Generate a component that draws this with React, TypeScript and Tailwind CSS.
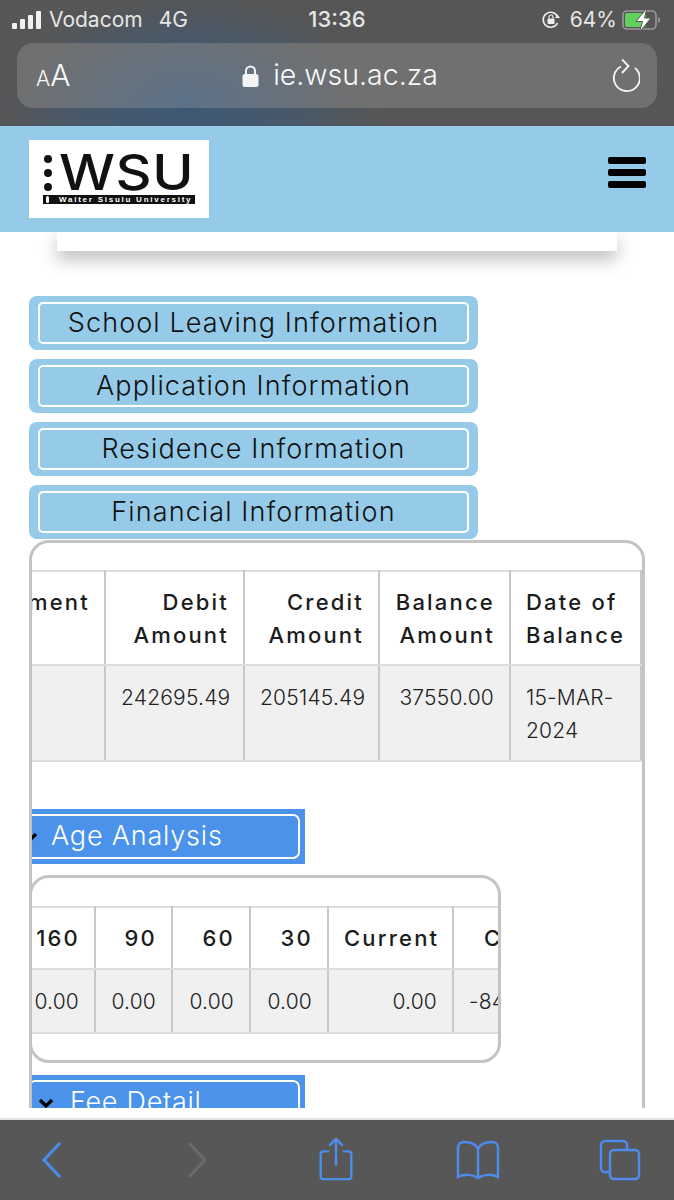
import React from "react";

const ff = "font-['Inter','Liberation_Sans',sans-serif]";

function InfoButton({ label }: { label: string }) {
  return (
    <div className="rounded-lg bg-[#95cbe8] px-[9px] py-[6px]">
      <div className="flex h-[42px] items-center justify-center rounded-[5px] border-2 border-white text-[27px] font-light tracking-[1.1px] text-[#111]">
        {label}
      </div>
    </div>
  );
}

function Th({ children, left, single }: { children: React.ReactNode; left?: boolean; single?: boolean }) {
  return (
    <th className={`border-x-2 border-b-2 border-t-2 border-x-[#c8c8c8] border-y-[#dcdcdc] pl-[15px] pr-[14px] pt-[14px] align-top text-[22px] font-medium leading-[33px] tracking-[2.2px] text-[#1c1c1c] ${single ? "pb-[13px]" : "pb-[12px]"} ${left ? "text-left" : "text-right"}`}>
      {children}
    </th>
  );
}

function Td({ children, left, single }: { children: React.ReactNode; left?: boolean; single?: boolean }) {
  return (
    <td className={`border-x-2 border-b-2 border-x-[#c8c8c8] border-b-[#dcdcdc] bg-[#f0f0f0] px-[15px] pt-[15px] align-top text-[21px] font-light leading-[33px] tracking-[0.2px] text-[#222] ${single ? "pb-[14px]" : "pb-[13px]"} ${left ? "text-left" : "text-right"}`}>
      {children}
    </td>
  );
}

function Chevron() {
  return (
    <svg width="16" height="10" viewBox="0 0 16 10" className="shrink-0">
      <path d="M2 2l6 6 6-6" fill="none" stroke="#000" strokeWidth="3.2" />
    </svg>
  );
}

export default function App() {
  return (
    <div className={`flex h-[1200px] w-[674px] flex-col overflow-hidden bg-white ${ff}`}>
      {/* Browser top */}
      <div className="h-[126px] shrink-0 bg-[#565656] bg-[radial-gradient(ellipse_190px_110px_at_190px_105px,#3d5875_0%,#47586a_55%,#565656_100%)] px-[12px] text-[#e6e6e6]">
        <div className="mb-[4px] grid h-[39px] grid-cols-3 items-center text-[21px]">
          <div className="flex items-center">
            <svg width="30" height="20" viewBox="0 0 30 20" className="mr-[7px]">
              <rect x="0" y="13" width="5" height="6" rx="1" fill="#f0f0f0" />
              <rect x="8" y="9" width="5" height="10" rx="1" fill="#f0f0f0" />
              <rect x="16" y="5" width="5" height="14" rx="1" fill="#f0f0f0" />
              <rect x="24" y="1" width="5" height="18" rx="1" fill="#f0f0f0" />
            </svg>
            <span>Vodacom</span>
            <span className="ml-[16px]">4G</span>
          </div>
          <div className="text-center text-[22px] font-medium">13:36</div>
          <div className="flex items-center justify-end">
            <svg width="20" height="20" viewBox="0 0 20 20" className="mr-[9px]">
              <path d="M16.5 13A7.5 7.5 0 1 1 16.5 6.5" fill="none" stroke="#eee" strokeWidth="1.6" />
              <path d="M14 8h5l-2.5-3.5z" fill="#eee" />
              <rect x="6.5" y="8.5" width="7" height="5.5" rx="1" fill="#eee" />
              <path d="M8 8.5V7a2 2 0 0 1 4 0v1.5" fill="none" stroke="#eee" strokeWidth="1.2" />
            </svg>
            <span>64%</span>
            <svg width="40" height="24" viewBox="0 0 40 24" className="ml-[5px]">
              <rect x="1" y="3" width="33" height="18" rx="4" fill="none" stroke="#9b9b9b" strokeWidth="1.6" />
              <rect x="3" y="5" width="21" height="14" rx="2" fill="#62d05c" />
              <path d="M36 9v6c1.500-.5 2-1.500 2-3s-.5-2.500-2-3z" fill="#9b9b9b" />
              <path d="M25 0L14 13.500h6.500L17.500 24 29 10h-6.500z" fill="#fff" stroke="#565656" strokeWidth="1" />
            </svg>
          </div>
        </div>
        <div className="mx-[5px] flex h-[65px] items-center justify-between rounded-[16px] bg-[#707070] bg-[radial-gradient(ellipse_170px_90px_at_170px_60px,#5d7289_0%,#68717a_60%,#707070_100%)] pl-[19px] pr-[17px] text-[#f8f8f8]">
          <div className="flex w-[34px] items-baseline">
            <span className="text-[21px] font-light">A</span>
            <span className="text-[30px] font-light">A</span>
          </div>
          <div className="flex items-center">
            <svg width="17" height="24" viewBox="0 0 17 24" className="mr-[14px]">
              <path d="M4 11V7a4.500 4.500 0 0 1 9 0v4" fill="none" stroke="#f4f4f4" strokeWidth="2" />
              <rect x="0.500" y="10" width="16" height="13" rx="2.500" fill="#f4f4f4" />
            </svg>
            <span className="text-[28.5px] font-light leading-none">ie.wsu.ac.za</span>
          </div>
          <svg width="30" height="36" viewBox="0 0 30 36" fill="none" stroke="#f4f4f4" strokeWidth="1.900">
            <path d="M11 8.500A13 13 0 1 0 25 10" />
            <path d="M12 1.500l6.500 6.500-6.500 7" />
          </svg>
        </div>
      </div>

      {/* Site header */}
      <div className="flex h-[106px] shrink-0 items-center justify-between bg-[#95cbe8] pl-[29px] pr-[29px]">
        <div className="mb-[1px] flex h-[78px] w-[180px] flex-col justify-center bg-white pl-[14px]">
          <div className="flex h-[38px] items-center">
            <div className="flex w-[16px] flex-col gap-[6px] pl-[1px]">
              <div className="h-[8px] w-[8px] rounded-full bg-[#111]" />
              <div className="h-[8px] w-[8px] rounded-full bg-[#111]" />
              <div className="h-[8px] w-[8px] rounded-full bg-[#111]" />
            </div>
            <span className="block origin-left scale-x-[1.14] text-[49px] font-medium leading-[38px] tracking-[0.5px] text-[#111]">WSU</span>
          </div>
          <div className="mt-[3px] flex h-[9px] w-[152px] items-center overflow-hidden bg-[#111] pl-[3px] font-['Liberation_Sans',sans-serif] text-[8px] font-bold leading-[9px] tracking-[1.75px] text-white">
            <div className="mr-[10px] h-[7px] w-[3px] shrink-0 rounded-full bg-white" />
            <span>Walter Sisulu University</span>
          </div>
        </div>
        <div className="mb-[14px] mr-[-1px] flex w-[38px] flex-col gap-[5px]">
          <div className="h-[7px] rounded-[2px] bg-black" />
          <div className="h-[7px] rounded-[2px] bg-black" />
          <div className="h-[7px] rounded-[2px] bg-black" />
        </div>
      </div>

      {/* Scrollable content */}
      <div className="h-[876px] shrink-0 overflow-hidden">
        <div className="mx-[57px] h-[19px] bg-white shadow-[0_8px_18px_rgba(0,0,0,0.28)]" />
        <div className="ml-[29px] mt-[45px] flex w-[449px] flex-col gap-[9px]">
          <InfoButton label="School Leaving Information" />
          <InfoButton label="Application Information" />
          <InfoButton label="Residence Information" />
          <InfoButton label="Financial Information" />
        </div>

        <div className="ml-[29px] mt-[1px] h-[640px] w-[616px] overflow-hidden rounded-[20px] border-[3px] border-[#c4c4c4] pt-[27px]">
          <table className="ml-[-128px] w-[736px] table-fixed border-collapse">
            <colgroup>
              <col className="w-[200px]" />
              <col className="w-[139px]" />
              <col className="w-[135px]" />
              <col className="w-[131px]" />
              <col className="w-[131px]" />
            </colgroup>
            <thead>
              <tr>
                <Th>Payment</Th>
                <Th>Debit Amount</Th>
                <Th>Credit Amount</Th>
                <Th>Balance Amount</Th>
                <Th left>Date of Balance</Th>
              </tr>
            </thead>
            <tbody>
              <tr>
                <Td> </Td>
                <Td>242695.49</Td>
                <Td>205145.49</Td>
                <Td>37550.00</Td>
                <Td left>15-MAR-2024</Td>
              </tr>
            </tbody>
          </table>

          <div className="mt-[47px] w-[273px] overflow-hidden bg-[#4a92ea] py-[5px] pr-[5px]">
            <div className="ml-[-16px] flex h-[45px] items-center gap-[13px] rounded-[7px] border-2 border-white pl-[4px] text-[27px] font-light tracking-[0.8px] text-white">
              <Chevron />
              <span>Age Analysis</span>
            </div>
          </div>

          <div className="ml-[-3px] mt-[11px] h-[188px] w-[472px] overflow-hidden rounded-[20px] border-[3px] border-[#c4c4c4] pt-[28px]">
            <table className="ml-[-32px] w-[575px] table-fixed border-collapse">
              <colgroup>
                <col className="w-[94px]" />
                <col className="w-[77px]" />
                <col className="w-[78px]" />
                <col className="w-[78px]" />
                <col className="w-[125px]" />
                <col className="w-[123px]" />
              </colgroup>
              <thead>
                <tr>
                  <Th single>160</Th>
                  <Th single>90</Th>
                  <Th single>60</Th>
                  <Th single>30</Th>
                  <Th single>Current</Th>
                  <Th single>Credit</Th>
                </tr>
              </thead>
              <tbody>
                <tr>
                  <Td single>0.00</Td>
                  <Td single>0.00</Td>
                  <Td single>0.00</Td>
                  <Td single>0.00</Td>
                  <Td single>0.00</Td>
                  <Td single>-84000.00</Td>
                </tr>
              </tbody>
            </table>
          </div>

          <div className="mt-[12px] w-[273px] overflow-hidden bg-[#4a92ea] py-[5px] pr-[5px]">
            <div className="ml-[-4px] flex h-[45px] items-center gap-[16px] rounded-[7px] border-2 border-white pl-[8px] text-[27px] font-light tracking-[0.7px] text-white">
              <Chevron />
              <span>Fee Detail</span>
            </div>
          </div>
        </div>
      </div>

      <div className="h-[12px] shrink-0 border-b-2 border-[#e4e4e4] bg-white" />

      {/* Browser bottom */}
      <div className="ml-[-19px] grid min-h-0 w-[710px] flex-1 grid-cols-5 items-center justify-items-center bg-[#575757]">
        <svg width="22" height="38" viewBox="0 0 22 38" fill="none" stroke="#4d8ced" strokeWidth="3">
          <path d="M19 2L3 19l16 17" />
        </svg>
        <svg width="22" height="38" viewBox="0 0 22 38" fill="none" stroke="#6b6b6b" strokeWidth="3" className="ml-[6px]">
          <path d="M3 2l16 17L3 36" />
        </svg>
        <svg width="36" height="44" viewBox="0 0 36 46" fill="none" stroke="#4d8ced" strokeWidth="2.500" className="mb-[3px]">
          <path d="M11 15H5a3 3 0 0 0-3 3v23a3 3 0 0 0 3 3h26a3 3 0 0 0 3-3V18a3 3 0 0 0-3-3h-6" />
          <path d="M18 30V2M11 9l7-7 7 7" />
        </svg>
        <svg width="44" height="40" viewBox="0 0 44 40" fill="none" stroke="#4d8ced" strokeWidth="2.500">
          <path d="M22 9C20 4 14 2 8 2 5 2 2 4 2 8v29c6-3 14-3 20 1 6-4 14-4 20-1V8c0-4-3-6-6-6-6 0-12 2-14 7zM22 9v29" />
        </svg>
        <svg width="42" height="42" viewBox="0 0 42 42" fill="none" stroke="#4d8ced" strokeWidth="2.500">
          <path d="M10 33H6a4 4 0 0 1-4-4V6a4 4 0 0 1 4-4h18a4 4 0 0 1 4 4v4" />
          <rect x="11" y="11" width="29" height="29" rx="4" />
        </svg>
      </div>
    </div>
  );
}
